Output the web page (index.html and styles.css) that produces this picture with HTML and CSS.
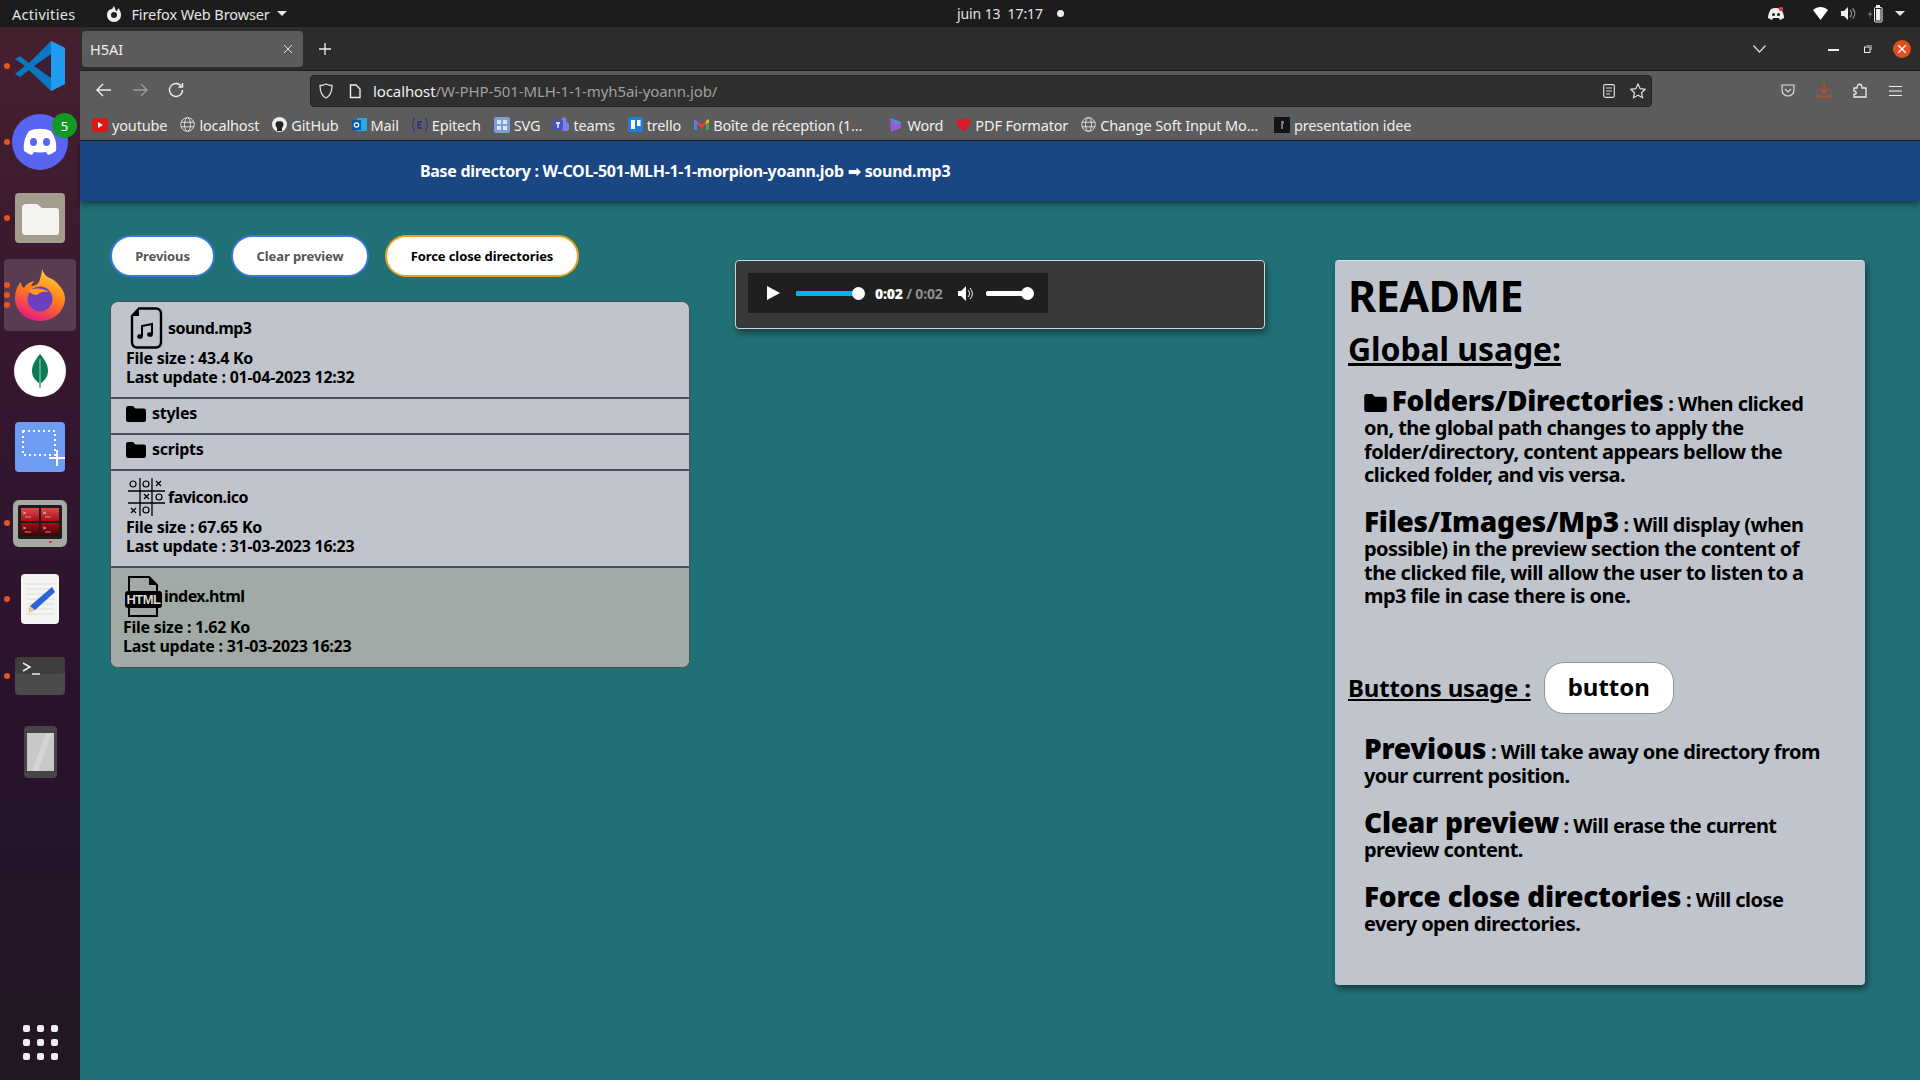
FILE: index.html
```html
<!DOCTYPE html>
<html lang="en">
<head>
    <meta charset="UTF-8">
    <title>H5AI</title>
    <link rel="stylesheet" href="styles.css">
</head>
<body>
    <div class="topbar">
        <span class="activities">Activities</span>
        <span class="appname">
            <svg width="16" height="18" viewBox="0 0 16 18"><path d="M8 1 6 4C3 4 1 7 1 10c0 4 3 7 7 7s7-3 7-7c0-3-1-5-3-7 0 2-1 3-2 3-1-2-1-3-2-5z" fill="#eee"/><circle cx="8" cy="10" r="3" fill="#1d1d1d"/></svg>
            Firefox Web Browser
            <i class="caret"></i>
        </span>
        <span class="clock">juin 13&nbsp; 17:17</span>
        <i class="clock-dot"></i>
        <span class="tray">
            <svg class="tray-discord" width="16" height="14" viewBox="0 0 16 14"><path d="M3 2c3-1.300 7-1.300 10 0 2 3 3 6 3 9l-4 2-1-2H5l-1 2-4-2c0-3 1-6 3-9z" fill="#eee"/><circle cx="5.500" cy="7.500" r="1.500" fill="#1d1d1d"/><circle cx="10.500" cy="7.500" r="1.500" fill="#1d1d1d"/><circle cx="13" cy="2" r="2.200" fill="#e53935"/></svg>
            <svg class="tray-wifi" width="16" height="13" viewBox="0 0 16 13"><path d="M0 3c4.500-4 10.500-4 15 0L7.500 13z" fill="#fff"/></svg>
            <svg class="tray-vol" width="15" height="13" viewBox="0 0 15 13"><path d="M0 4h3l4-4v13l-4-4H0z" fill="#eee"/><path d="M9 3c2 2 2 5 0 7M11.500 1.500c3 3 3 7 0 10" fill="none" stroke="#999" stroke-width="1.200"/></svg>
            <svg class="tray-bat" width="15" height="18" viewBox="0 0 15 18"><path d="M3 5 0 10h2l-1 4 3-6H2z" fill="#777"/><rect x="6.500" y="2.500" width="7.500" height="14.500" rx="1" fill="none" stroke="#eee"/><rect x="8" y="0" width="4" height="2" fill="#eee"/><rect x="8" y="4" width="4.500" height="11.500" fill="#eee"/></svg>
            <i class="caret"></i>
        </span>
    </div>

    <div class="desktop">
        <nav class="dock">
            <div class="slot">
                <i class="run"></i>
                <svg width="50" height="50" viewBox="0 0 50 50"><path d="M36 0 50 7v36l-14 7-22-21-9 7-5-3 10-8L0 18l5-3 9 7z" fill="#0a78c2"/><path d="M36 0 50 7v36l-14 7z" fill="#1f9cf0"/><path d="M36 13 19 25l17 12z" fill="#3b1f36"/></svg>
            </div>
            <div class="slot">
                <i class="run"></i>
                <svg width="56" height="56" viewBox="0 0 56 56"><circle cx="28" cy="28" r="28" fill="#5865f2"/><path d="M17 17c7-3 15-3 22 0 4 6 6 12 5 20-3 2-5 3-8 4l-2-3 3-1c-6 2-12 2-18 0l3 1-2 3c-3-1-5-2-8-4-1-8 1-14 5-20z" fill="#fff"/><ellipse cx="21.500" cy="28" rx="3.500" ry="4" fill="#5865f2"/><ellipse cx="34.500" cy="28" rx="3.500" ry="4" fill="#5865f2"/></svg>
                <span class="badge">5</span>
            </div>
            <div class="slot">
                <i class="run"></i>
                <svg width="50" height="50" viewBox="0 0 50 50"><rect width="50" height="50" rx="4" fill="#a49d8d"/><path d="M7 15c0-3 2-4 4-4h11l5 4h14c2 0 3 1 3 3v21c0 2-1 3-3 3H10c-2 0-3-1-3-3z" fill="#f5f3ef"/></svg>
            </div>
            <div class="slot slot-active">
                <i class="run run-a"></i><i class="run run-b"></i><i class="run run-c"></i>
                <svg width="50" height="52" viewBox="0 0 50 52">
                    <defs>
                        <linearGradient id="fx" x1="0.700" y1="0" x2="0.300" y2="1"><stop offset="0" stop-color="#ffd43a"/><stop offset="0.500" stop-color="#ff7a1a"/><stop offset="1" stop-color="#e5158a"/></linearGradient>
                    </defs>
                    <path d="M27 0c2 6 5 8 10 10 8 5 13 13 13 19 0 13-11 23-25 23S0 42 0 29c0-6 2-12 6-16 0 3 1 5 3 6 2-4 6-6 10-7l-3 5c4 0 8-2 9-7 1-3 2-7 2-10z" fill="url(#fx)"/>
                    <circle cx="25" cy="30" r="12.500" fill="#6c3fc0"/>
                    <path d="M14 22c6-4 14-3 20 1-6-1-10 1-12 3-3 0-6-1-8-4z" fill="#ff9a1f"/>
                </svg>
            </div>
            <div class="slot">
                <svg width="52" height="52" viewBox="0 0 52 52"><circle cx="26" cy="26" r="26" fill="#fff"/><path d="M26 9c6 7 8 12 8 17 0 6-4 10-7 12l-.5 5h-1l-.5-5c-3-2-7-6-7-12 0-5 2-10 8-17z" fill="#0b7a55"/><path d="M26 14v28" stroke="#a8d6c2" stroke-width="1"/></svg>
            </div>
            <div class="slot">
                <svg width="50" height="50" viewBox="0 0 50 50"><rect width="50" height="50" rx="4" fill="#6d9cf2"/><rect x="8" y="9" width="32" height="24" fill="none" stroke="#fff" stroke-width="2" stroke-dasharray="2 3"/><path d="M42 28v16M34 36h16" stroke="#fff" stroke-width="2"/></svg>
            </div>
            <div class="slot">
                <i class="run"></i>
                <svg width="54" height="47" viewBox="0 0 54 47"><defs><linearGradient id="red" x1="0" y1="0" x2="0" y2="1"><stop offset="0" stop-color="#e0474c"/><stop offset="1" stop-color="#a80f14"/></linearGradient><linearGradient id="dark" x1="0" y1="0" x2="0" y2="1"><stop offset="0" stop-color="#a01014"/><stop offset="1" stop-color="#3a0305"/></linearGradient></defs><rect width="54" height="47" rx="6" fill="#a8a8a4"/><rect x="5" y="5" width="44" height="34" rx="2" fill="#1c1c1c"/><rect x="8" y="8" width="18" height="13" fill="url(#red)"/><rect x="28" y="8" width="18" height="13" fill="url(#red)"/><rect x="8" y="23" width="18" height="13" fill="url(#dark)"/><rect x="28" y="23" width="18" height="13" fill="url(#dark)"/><path d="M10 12l3 1-3 1M12 17h6M30 12l3 1-3 1M32 17h6M10 27l3 1-3 1M12 32h6M30 27l3 1-3 1M32 32h6" fill="none" stroke="#f3c0c0" stroke-width=".7"/><rect x="36" y="41" width="3" height="2" fill="#e33"/></svg>
            </div>
            <div class="slot">
                <i class="run"></i>
                <svg width="38" height="50" viewBox="0 0 38 50"><rect width="38" height="50" rx="4" fill="#f4f4f2"/><path d="M5 10h28M5 15h28M5 20h28M5 25h28M5 30h28M5 35h28M5 40h28" stroke="#dcdcd8"/><path d="M31 13l3 5-20 18-6 2 1-6z" fill="#2d62d8"/><path d="M9 32l5 4-6 3z" fill="#f3c9a0"/></svg>
            </div>
            <div class="slot">
                <i class="run"></i>
                <svg width="50" height="38" viewBox="0 0 50 38"><rect width="50" height="38" rx="4" fill="#4a4a4a"/><rect width="50" height="17" rx="4" fill="#3e3e3e"/><path d="M8 6l7 4-7 4" fill="none" stroke="#eee" stroke-width="1.500"/><path d="M17 17h8" stroke="#eee" stroke-width="1.500"/></svg>
            </div>
            <div class="slot">
                <svg width="33" height="52" viewBox="0 0 33 52"><rect width="33" height="52" rx="4" fill="#454545"/><rect x="3" y="7" width="27" height="38" fill="#c8c8c8"/><path d="M8 45 22 7h6L14 45z" fill="#d4d4d4"/></svg>
            </div>
            <div class="dock-grid">
                <i></i><i></i><i></i><i></i><i></i><i></i><i></i><i></i><i></i>
            </div>
        </nav>

        <div class="browser">
            <div class="tabbar">
                <div class="tab">
                    <span>H5AI</span>
                    <svg width="10" height="10" viewBox="0 0 10 10"><path d="M1 1l8 8M9 1l-8 8" stroke="#ddd" stroke-width="1"/></svg>
                </div>
                <svg class="newtab" width="12" height="12" viewBox="0 0 12 12"><path d="M6 0v12M0 6h12" stroke="#eee" stroke-width="1.300"/></svg>
                <svg class="tabs-list" width="13" height="8" viewBox="0 0 13 8"><path d="M.5.500 6.500 7l6-6.500" fill="none" stroke="#ddd" stroke-width="1.200"/></svg>
                <i class="win-min"></i>
                <svg class="win-max" width="8" height="8" viewBox="0 0 8 8"><rect x=".5" y="2" width="5.500" height="5.500" fill="none" stroke="#eee"/><path d="M2.500.5H7.500V5" fill="none" stroke="#aaa" stroke-width=".8"/></svg>
                <span class="win-close"><svg width="8" height="8" viewBox="0 0 8 8"><path d="M0 0l8 8M8 0L0 8" stroke="#fff" stroke-width="1.400"/></svg></span>
            </div>

            <div class="toolbar">
                <svg class="nav-back" width="16" height="14" viewBox="0 0 16 14"><path d="M15 7H1M7 1 1 7l6 6" fill="none" stroke="#eee" stroke-width="1.400"/></svg>
                <svg class="nav-fwd" width="16" height="14" viewBox="0 0 16 14"><path d="M1 7h14M9 1l6 6-6 6" fill="none" stroke="#9a9a9a" stroke-width="1.400"/></svg>
                <svg class="nav-reload" width="16" height="16" viewBox="0 0 16 16"><path d="M13.500 4.500A6.500 6.500 0 1 0 14.500 8" fill="none" stroke="#eee" stroke-width="1.400"/><path d="M14.500 1v4h-4" fill="none" stroke="#eee" stroke-width="1.400"/></svg>
                <div class="urlbar">
                    <svg width="14" height="16" viewBox="0 0 14 16"><path d="M7 1c2 1 4 1.500 6 1.500C13 9 11 13 7 15 3 13 1 9 1 2.500 3 2.500 5 2 7 1z" fill="none" stroke="#ddd" stroke-width="1.300"/></svg>
                    <svg class="url-page" width="12" height="15" viewBox="0 0 12 15"><path d="M1.500 1h5.500l4 4v8.500H1.500z" fill="none" stroke="#eee" stroke-width="1.400"/></svg>
                    <span class="url"><b>localhost</b>/W-PHP-501-MLH-1-1-myh5ai-yoann.job/</span>
                    <svg class="url-reader" width="12" height="14" viewBox="0 0 12 14"><rect x=".7" y=".7" width="10.600" height="12.600" rx="1.500" fill="none" stroke="#ddd" stroke-width="1.200"/><path d="M3 4h6M3 7h6M3 10h4" stroke="#ddd"/></svg>
                    <svg class="url-star" width="16" height="16" viewBox="0 0 16 16"><path d="M8 1l2.200 4.700 5 .6-3.700 3.400 1 5L8 12.200 3.500 14.700l1-5L.8 6.300l5-.6z" fill="none" stroke="#ddd" stroke-width="1.200"/></svg>
                </div>
                <svg class="tool-pocket" width="14" height="14" viewBox="0 0 14 14"><path d="M1 1h12v5a6 6 0 0 1-12 0z" fill="none" stroke="#ddd" stroke-width="1.200"/><path d="M4 5l3 3 3-3" fill="none" stroke="#ddd" stroke-width="1.200"/></svg>
                <svg class="tool-down" width="14" height="15" viewBox="0 0 14 15"><path d="M7 0v10M3 6l4 4 4-4M1 11v3h12v-3" fill="none" stroke="#d9481c" stroke-width="1.200"/></svg>
                <svg class="tool-ext" width="14" height="15" viewBox="0 0 14 15"><path d="M1 5h3c0-5 5-5 5 0h4v9H1v-3c3 1 3-3 0-3z" fill="none" stroke="#eee" stroke-width="1.300"/></svg>
                <svg class="tool-menu" width="13" height="10" viewBox="0 0 13 10"><path d="M0 .5h13M0 5h13M0 9.500h13" stroke="#eee" stroke-width="1"/></svg>
            </div>

            <div class="bookmarks">
                <span class="mark"><svg width="16" height="16" viewBox="0 0 16 16"><rect y="1" width="16" height="14" rx="4" fill="#e01515"/><path d="M6 5l5 3-5 3z" fill="#fff"/></svg>youtube</span>
                <span class="mark"><svg width="15" height="15" viewBox="0 0 15 15"><g fill="none" stroke="#ddd"><circle cx="7.500" cy="7.500" r="6.800"/><ellipse cx="7.500" cy="7.500" rx="3" ry="6.800"/><path d="M1 5.200h13M1 9.800h13"/></g></svg>localhost</span>
                <span class="mark"><svg width="15" height="15" viewBox="0 0 15 15"><circle cx="7.500" cy="7.500" r="7.500" fill="#eee"/><path d="M5 14v-3C3 9 3 6 5 4.500c1.500-.5 3.500-.5 5 0C12 6 12 9 10 11v3z" fill="#222"/></svg>GitHub</span>
                <span class="mark"><svg width="15" height="15" viewBox="0 0 15 15"><rect x="5" y="1" width="10" height="13" fill="#28a8ea"/><rect y="3" width="9" height="10" fill="#0a5aa8"/><circle cx="4.500" cy="8" r="2.200" fill="none" stroke="#fff" stroke-width="1.200"/></svg>Mail</span>
                <span class="mark"><svg width="16" height="16" viewBox="0 0 16 16"><path d="M3 1C1 1 2 7 0 8c2 1 1 7 3 7M13 1c2 0 1 6 3 7-2 1-1 7-3 7" fill="none" stroke="#2b2a8a"/><path d="M10 5H6v6h4M6 8h3" fill="none" stroke="#2b2a8a" stroke-width="1.300"/></svg>Epitech</span>
                <span class="mark"><svg width="16" height="16" viewBox="0 0 16 16"><rect width="16" height="16" rx="2" fill="#7d9fd6"/><path d="M3 3h4v4H3zM9 3h4v4H9zM3 9h4v4H3zM9 9h4v4H9z" fill="#dbe5f5"/></svg>SVG</span>
                <span class="mark"><svg width="16" height="16" viewBox="0 0 16 16"><circle cx="11" cy="3" r="2.500" fill="#7b83eb"/><rect x="8" y="5" width="8" height="9" rx="3" fill="#7b83eb"/><rect y="3" width="10" height="10" rx="1" fill="#4b53bc"/><path d="M3 6h4M5 6v5" stroke="#fff" stroke-width="1.300"/></svg>teams</span>
                <span class="mark"><svg width="15" height="15" viewBox="0 0 15 15"><rect width="15" height="15" rx="2" fill="#1f7fe0"/><rect x="3" y="3" width="4" height="9" fill="#fff"/><rect x="9" y="3" width="3.500" height="6" fill="#fff"/></svg>trello</span>
                <span class="mark"><svg width="15" height="15" viewBox="0 0 15 15"><path d="M0 2l3 2v9H0z" fill="#4285f4"/><path d="M12 4l3-2v11h-3z" fill="#34a853"/><path d="M3 4l4.500 4L12 4v3l-4.500 4L3 7z" fill="#ea4335"/><path d="M12 4l3-2v3l-3 2z" fill="#fbbc04"/></svg>Boîte de réception (1…</span>
                <span class="mark mark-word"><svg width="15" height="16" viewBox="0 0 15 16"><path d="M2 1l11 4v6L3 15z" fill="#9a5ad8"/><path d="M2 1l11 4-5 3z" fill="#4a8fe0"/></svg>Word</span>
                <span class="mark"><svg width="15" height="15" viewBox="0 0 15 15"><path d="M7.500 15 1 8C-1 4 3 0 6 2l1.500 1.500L11 1l4 4-3 5z" fill="#e0162b"/></svg>PDF Formator</span>
                <span class="mark"><svg width="15" height="15" viewBox="0 0 15 15"><g fill="none" stroke="#ddd"><circle cx="7.500" cy="7.500" r="6.800"/><ellipse cx="7.500" cy="7.500" rx="3" ry="6.800"/><path d="M1 5.200h13M1 9.800h13"/></g></svg>Change Soft Input Mo…</span>
                <span class="mark mark-last"><svg width="16" height="16" viewBox="0 0 16 16"><rect width="16" height="16" fill="#141414"/><path d="M7 4h3v3H9v5H7z" fill="#777"/></svg>presentation idee</span>
            </div>

            <header class="site-head">Base directory : W-COL-501-MLH-1-1-morpion-yoann.job <span class="arrow">➡</span> sound.mp3</header>

            <main class="page">
                <section class="col-files">
                    <div class="actions">
                        <button class="btn btn-prev">Previous</button>
                        <button class="btn btn-clear">Clear preview</button>
                        <button class="btn btn-force">Force close directories</button>
                    </div>
                    <div class="files">
                        <div class="row row-sound">
                            <div class="row-title">
                                <svg width="34" height="42" viewBox="0 0 34 42"><path d="M10 1.500h17a5 5 0 0 1 5 5v29a5 5 0 0 1-5 5H8a5 5 0 0 1-5-5V9z" fill="none" stroke="#000" stroke-width="2.400"/><path d="M10 1.500V9H3z" fill="#000"/><path d="M13 29V19l10-2v10" fill="none" stroke="#000" stroke-width="2"/><ellipse cx="11" cy="29.500" rx="2.800" ry="2.300"/><ellipse cx="21" cy="27.500" rx="2.800" ry="2.300"/></svg>
                                sound.mp3
                            </div>
                            <p>File size : 43.4 Ko</p>
                            <p>Last update : 01-04-2023 12:32</p>
                        </div>
                        <div class="row row-dir">
                            <svg class="folder" width="20" height="16" viewBox="0 0 20 16"><path d="M0 2a2 2 0 0 1 2-2h5l2.500 2.500H18a2 2 0 0 1 2 2V14a2 2 0 0 1-2 2H2a2 2 0 0 1-2-2z"/></svg>
                            styles
                        </div>
                        <div class="row row-dir">
                            <svg class="folder" width="20" height="16" viewBox="0 0 20 16"><path d="M0 2a2 2 0 0 1 2-2h5l2.500 2.500H18a2 2 0 0 1 2 2V14a2 2 0 0 1-2 2H2a2 2 0 0 1-2-2z"/></svg>
                            scripts
                        </div>
                        <div class="row row-ico">
                            <div class="row-title">
                                <svg width="37" height="38" viewBox="0 0 37 38">
                                    <path d="M12 0v38M24 0v38M0 13h37M0 25h37" stroke="#000" stroke-width="1.300"/>
                                    <g fill="none" stroke="#000" stroke-width="1.200">
                                        <circle cx="5" cy="6" r="3"/><circle cx="18" cy="6" r="3"/><path d="M28 3l5 5M33 3l-5 5"/>
                                        <path d="M16 16l5 5M21 16l-5 5"/><circle cx="31" cy="19" r="3"/>
                                        <path d="M3 30l5 5M8 30l-5 5"/><circle cx="18" cy="32" r="3"/>
                                    </g>
                                </svg>
                                favicon.ico
                            </div>
                            <p>File size : 67.65 Ko</p>
                            <p>Last update : 31-03-2023 16:23</p>
                        </div>
                        <div class="row row-html">
                            <div class="row-title">
                                <svg width="37" height="41" viewBox="0 0 37 41">
                                    <path d="M4 15V1h20l8 8v6M4 32v8h28v-8" fill="none" stroke="#000" stroke-width="2"/>
                                    <path d="M24 1v8h8z"/>
                                    <rect y="15" width="37" height="17" rx="3"/>
                                    <text x="18.500" y="28" class="html-tag">HTML</text>
                                </svg>
                                index.html
                            </div>
                            <p>File size : 1.62 Ko</p>
                            <p>Last update : 31-03-2023 16:23</p>
                        </div>
                    </div>
                </section>

                <section class="preview">
                    <div class="player">
                        <svg width="13" height="14" viewBox="0 0 13 14"><path d="M0 0l13 7-13 7z" fill="#fff"/></svg>
                        <div class="track"><i class="fill"></i><i class="thumb"></i></div>
                        <span class="time"><b>0:02</b> <em>/ 0:02</em></span>
                        <svg class="speaker" width="17" height="15" viewBox="0 0 17 15"><path d="M0 5h3l5-5v15l-5-5H0z" fill="#fff"/><path d="M10 4c2 2 2 5 0 7M12 2c3 3 3 8 0 11" fill="none" stroke="#fff" stroke-width="1"/></svg>
                        <div class="track track-vol"><i class="fill"></i><i class="thumb"></i></div>
                    </div>
                </section>

                <section class="readme">
                    <h1>README</h1>
                    <h2>Global usage:</h2>
                    <p class="entry entry-folder"><svg class="folder-big" width="23" height="18" viewBox="0 0 20 16"><path d="M0 2a2 2 0 0 1 2-2h5l2.500 2.500H18a2 2 0 0 1 2 2V14a2 2 0 0 1-2 2H2a2 2 0 0 1-2-2z"/></svg> <strong>Folders/Directories</strong> : When clicked on, the global path changes to apply the folder/directory, content appears bellow the clicked folder, and vis versa.</p>
                    <p class="entry"><strong>Files/Images/Mp3</strong> : Will display (when possible) in the preview section the content of the clicked file, will allow the user to listen to a mp3 file in case there is one.</p>
                    <div class="btn-usage">
                        <h3>Buttons usage :</h3>
                        <span class="demo-btn">button</span>
                    </div>
                    <p class="entry"><strong>Previous</strong> : Will take away one directory from your current position.</p>
                    <p class="entry"><strong>Clear preview</strong> : Will erase the current preview content.</p>
                    <p class="entry"><strong>Force close directories</strong> : Will close every open directories.</p>
                </section>
            </main>
        </div>
    </div>
</body>
</html>
```
FILE: styles.css
```css
* {
    margin: 0;
    padding: 0;
    box-sizing: border-box;
}

html, body {
    height: 100%;
    overflow: hidden;
}

body {
    font-family: "Noto Sans", "Open Sans", sans-serif;
    background: #217075;
    display: flex;
    flex-direction: column;
}

i {
    display: block;
    font-style: normal;
}

svg {
    display: block;
    flex: none;
}

/* ubuntu top bar */
.topbar {
    height: 27px;
    background: #1c1c1c;
    color: #e4e4e4;
    font-size: 14.500px;
    letter-spacing: -0.1px;
    display: flex;
    align-items: center;
    position: relative;
    padding-left: 12px;
    flex: none;
}

.activities { letter-spacing: 0.3px; }

.appname {
    display: flex;
    align-items: center;
    gap: 9px;
    margin-left: 31px;
}

.appname .caret { margin-left: -2px; }

.caret {
    width: 0;
    height: 0;
    border-left: 5px solid transparent;
    border-right: 5px solid transparent;
    border-top: 5px solid #e4e4e4;
}

.clock {
    position: absolute;
    left: 957px;
    font-size: 14px;
}

.clock-dot {
    position: absolute;
    left: 1057px;
    top: 10px;
    width: 7px;
    height: 7px;
    border-radius: 50%;
    background: #eee;
}

.tray {
    margin-left: auto;
    display: flex;
    align-items: center;
    padding-right: 15px;
}

.tray-wifi { margin-left: 29px; }
.tray-vol { margin-left: 12px; }
.tray-bat { margin-left: 12px; }
.tray .caret { margin-left: 12px; }

.desktop {
    flex: 1;
    display: flex;
    min-height: 0;
}

/* dock */
.dock {
    width: 80px;
    flex: none;
    background: linear-gradient(180deg, #47202f 0%, #34162f 35%, #25132a 75%, #221722 100%);
    display: flex;
    flex-direction: column;
    align-items: center;
    padding-top: 1px;
}

.slot {
    width: 72px;
    height: 76.200px;
    display: flex;
    align-items: center;
    justify-content: center;
    position: relative;
    flex: none;
}

.slot-active {
    background: #5a3c52;
    border-radius: 4px;
    height: 72px;
    margin: 2.100px 0;
}

.run {
    position: absolute;
    left: 0;
    top: 50%;
    margin-top: -3px;
    width: 6px;
    height: 6px;
    border-radius: 50%;
    background: #e95420;
}

.run-a { margin-top: -13px; }
.run-c { margin-top: 7px; }

.badge {
    position: absolute;
    right: -1px;
    top: 9px;
    width: 25px;
    height: 25px;
    border-radius: 50%;
    background: #109a23;
    color: #fff;
    font-size: 13px;
    display: flex;
    align-items: center;
    justify-content: center;
}

.dock-grid {
    margin-top: auto;
    margin-bottom: 20px;
    display: grid;
    grid-template-columns: repeat(3, 7px);
    gap: 7px;
}

.dock-grid i {
    height: 7px;
    background: #eee;
    border-radius: 2px;
}

/* firefox */
.browser {
    flex: 1;
    min-width: 0;
    display: flex;
    flex-direction: column;
}

.tabbar {
    height: 44px;
    background: #2d2d2d;
    border-bottom: 1px solid #1c1c1c;
    display: flex;
    align-items: center;
    padding-left: 2px;
    flex: none;
}

.tab {
    width: 221px;
    height: 36px;
    background: #5b5b5b;
    border-radius: 4px;
    color: #eee;
    font-size: 14.500px;
    display: flex;
    align-items: center;
    justify-content: space-between;
    padding: 0 10px 0 8px;
}

.newtab { margin-left: 16px; }
.tabs-list { margin-left: 1422px; }

.win-min {
    width: 11px;
    height: 1.500px;
    background: #eee;
    margin: 3px 0 0 62px;
}

.win-max { margin-left: 25px; }

.win-close {
    width: 18px;
    height: 18px;
    border-radius: 50%;
    background: #e2501c;
    display: flex;
    align-items: center;
    justify-content: center;
    margin-left: 21px;
}

.toolbar {
    height: 37px;
    background: #5c5c5c;
    display: flex;
    align-items: center;
    flex: none;
}

.nav-back { margin-left: 16px; }
.nav-fwd { margin-left: 20px; }
.nav-reload { margin-left: 20px; }

.urlbar {
    width: 1342px;
    height: 32px;
    margin-left: 126px;
    margin-top: 3px;
    background: #2f2f2f;
    border: 1px solid #222;
    border-radius: 4px;
    display: flex;
    align-items: center;
    padding-left: 8px;
    font-size: 15px;
    color: #a0a0a0;
}

.url-page { margin-left: 16px; }

.url {
    margin-left: 12px;
    letter-spacing: -0.1px;
}

.url b {
    font-weight: 400;
    color: #eee;
}

.url-reader { margin-left: auto; }
.url-star { margin: 0 5px 0 15px; }

.tool-pocket { margin-left: 129px; margin-top: 2px; }
.tool-down { margin-left: 22px; margin-top: 2px; }
.tool-ext { margin-left: 22px; margin-top: 2px; }
.tool-menu { margin-left: 22px; margin-top: 2px; }

.bookmarks {
    height: 33px;
    background: #5c5c5c;
    border-bottom: 1px solid #1c1c1c;
    display: flex;
    align-items: center;
    gap: 13px;
    padding: 1px 0 0 12px;
    color: #eee;
    font-size: 14.500px;
    letter-spacing: -0.15px;
    flex: none;
}

.mark {
    display: flex;
    align-items: center;
    gap: 4px;
    white-space: nowrap;
}

.mark-word { margin-left: 13px; }
.mark-last { margin-left: 3px; }

/* h5ai page */
.site-head {
    height: 60px;
    background: #1a4684;
    color: #fff;
    font-size: 16px;
    font-weight: 700;
    letter-spacing: -0.3px;
    padding: 19px 0 0 340px;
    box-shadow: 0 3px 6px rgba(0, 0, 0, 0.45);
    flex: none;
    position: relative;
}

.arrow {
    font-family: "DejaVu Sans", sans-serif;
    font-size: 16px;
}

.page {
    flex: 1;
    display: flex;
    align-items: flex-start;
    padding-left: 30px;
}

.col-files {
    width: 580px;
    padding-top: 34px;
    flex: none;
}

.actions {
    display: flex;
    gap: 16px;
    margin-bottom: 24px;
}

.btn {
    height: 42px;
    background: #fff;
    border: 2px solid #3a78d8;
    border-radius: 21px;
    font-family: inherit;
    font-size: 13px;
    font-weight: 700;
    letter-spacing: -0.1px;
    color: #555;
}

.btn-prev { width: 105px; }
.btn-clear { width: 138px; }

.btn-force {
    width: 194px;
    border-color: #eda21f;
    color: #000;
}

.files {
    border: 1px solid #4a4e5a;
    border-radius: 8px;
    overflow: hidden;
    background: #c0c4cd;
    font-size: 16px;
    font-weight: 700;
    letter-spacing: -0.25px;
    color: #000;
}

.row {
    border-bottom: 2px solid #4a4e5a;
    line-height: 19px;
}

.row-title {
    display: flex;
    align-items: center;
    gap: 5px;
    letter-spacing: -0.55px;
}

.row-sound {
    height: 97px;
    padding: 5px 0 0 15px;
}

.row-sound svg { margin-left: 3px; }

.row-dir {
    height: 36px;
    display: flex;
    align-items: center;
    gap: 6px;
    padding: 0 0 5px 15px;
}

.row-ico {
    height: 97px;
    padding: 7px 0 0 15px;
}

.row-ico svg { margin-left: 2px; }
.row-ico .row-title { margin-bottom: 2px; gap: 3px; }

.row-html {
    height: 99px;
    padding: 8px 0 0 12px;
    border-bottom: 0;
    background: #a1aaa5;
}

.row-html svg { margin-left: 2px; }
.row-html .row-title { margin-bottom: 1px; gap: 2px; }

.html-tag {
    font-family: "Liberation Sans", sans-serif;
    font-size: 13px;
    font-weight: 700;
    letter-spacing: -0.5px;
    text-anchor: middle;
    fill: #d8d8d8;
}

/* audio */
.preview {
    width: 530px;
    height: 69px;
    margin: 59px 0 0 45px;
    background: #383838;
    border: 1px solid #d4d4d4;
    border-radius: 4px;
    box-shadow: 2px 4px 6px rgba(0, 0, 0, 0.4);
    padding: 12px;
    flex: none;
}

.player {
    width: 300px;
    height: 40px;
    background: #1f1f1f;
    display: flex;
    align-items: center;
    padding-left: 19px;
    color: #fff;
    font-size: 14px;
    font-weight: 700;
    letter-spacing: -0.2px;
}

.track {
    width: 68px;
    height: 5px;
    margin-left: 16px;
    background: #fff;
    border-radius: 3px;
    position: relative;
}

.track .fill {
    height: 5px;
    width: 61px;
    background: #00b4f0;
    border-radius: 3px;
}

.track .thumb {
    position: absolute;
    right: -1px;
    top: -4px;
    width: 13px;
    height: 13px;
    border-radius: 50%;
    background: #fff;
}

.time {
    margin-left: 11px;
    white-space: nowrap;
}

.time em {
    font-style: normal;
    color: #8f8f8f;
}

.speaker { margin-left: 15px; }

.track-vol {
    width: 47px;
    margin-left: 11px;
}

.track-vol .fill {
    width: 40px;
    background: #fff;
}

/* readme */
.readme {
    width: 530px;
    height: 725px;
    margin: 59px 0 0 70px;
    background: #c0c4cd;
    border-top: 1px solid #e0e2e6;
    border-radius: 4px;
    box-shadow: 2px 4px 6px rgba(0, 0, 0, 0.45);
    padding: 10px 13px;
    color: #000;
    font-weight: 700;
    flex: none;
}

.readme h1 {
    font-size: 43px;
    line-height: 50px;
    letter-spacing: -0.5px;
}

.readme h2 {
    font-size: 32px;
    line-height: 40px;
    margin: 8px 0 16px;
    letter-spacing: -0.1px;
    text-decoration: underline;
}

.entry {
    font-size: 20px;
    line-height: 23.500px;
    letter-spacing: -0.55px;
    margin: 15px 30px 19.500px 16px;
}

.entry strong {
    font-size: 28px;
    line-height: 31px;
    letter-spacing: -0.25px;
}

.folder-big {
    display: inline-block;
    vertical-align: -1px;
}

.btn-usage {
    display: flex;
    align-items: center;
    gap: 13px;
    margin: 54px 0 19.500px;
}

.btn-usage h3 {
    font-size: 24px;
    letter-spacing: -0.2px;
    text-decoration: underline;
}

.demo-btn {
    width: 130px;
    height: 52px;
    background: #fff;
    border: 1px solid #7f9d94;
    border-radius: 20px;
    font-size: 24px;
    display: flex;
    align-items: center;
    justify-content: center;
    padding-bottom: 3px;
}
```
